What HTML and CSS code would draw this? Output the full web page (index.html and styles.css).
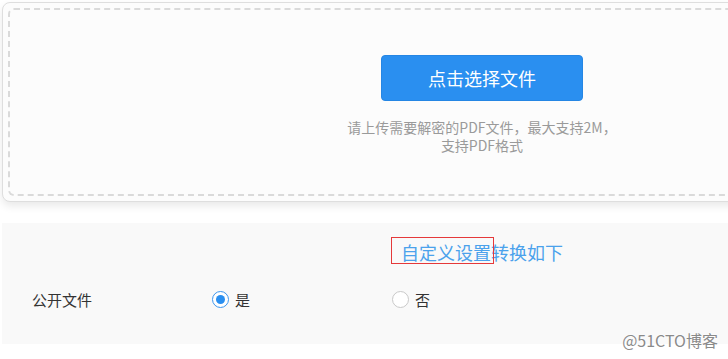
FILE: index.html
```html
<!DOCTYPE html>
<html lang="zh">
<head>
<meta charset="utf-8">
<link rel="stylesheet" href="styles.css">
</head>
<body>
<div class="page">
  <div class="card">
    <div class="drop">
      <button class="pick">点击选择文件</button>
      <div class="hint">
        <div class="line">请上传需要解密的PDF文件，最大支持2M，</div>
        <div class="line">支持PDF格式</div>
      </div>
    </div>
  </div>
  <div class="settings">
    <div class="title">自定义设置转换如下</div>
    <div class="mark"></div>
    <div class="row">
      <div class="label">公开文件</div>
      <label class="opt"><span class="radio on"></span><span>是</span></label>
      <label class="opt"><span class="radio"></span><span>否</span></label>
    </div>
  </div>
  <div class="water">@51CTO博客</div>
</div>
</body>
</html>
```
FILE: styles.css
```css
html, body {
  margin: 0;
  padding: 0;
  background: #ffffff;
  overflow: hidden;
}
.page {
  position: relative;
  width: 728px;
  height: 359px;
  overflow: hidden;
  font-family: "Noto Sans CJK SC", "Noto Sans", sans-serif;
  padding-top: 2px;
  box-sizing: border-box;
}
.card {
  margin-left: 2px;
  width: 960px;
  height: 200px;
  box-sizing: border-box;
  border: 1px solid #dedede;
  border-radius: 8px;
  background: #fcfcfc;
  padding: 5px;
  box-shadow: 0 4px 8px rgba(0, 0, 0, 0.09);
}
.drop {
  height: 188px;
  box-sizing: border-box;
  border: 2px dashed #dadada;
  border-radius: 6px;
  display: flex;
  flex-direction: column;
  align-items: center;
  padding-top: 45px;
}
.pick {
  width: 202px;
  height: 46px;
  border: 1px solid #2586e4;
  border-radius: 4px;
  background: #2a8ff0;
  color: #ffffff;
  font-family: inherit;
  font-size: 18px;
  padding: 0;
  margin: 0;
}
.hint {
  margin-top: 17px;
  font-size: 14px;
  color: #9a9a9a;
  text-align: center;
}
.line {
  height: 18px;
  line-height: 18px;
}
.settings {
  position: relative;
  margin-top: 21px;
  margin-left: 2px;
  width: 960px;
  height: 121px;
  box-sizing: border-box;
  background: #f9f9f9;
  padding-top: 16px;
}
.title {
  text-align: center;
  font-size: 18px;
  line-height: 26px;
  color: #4ba2ec;
}
.mark {
  position: absolute;
  left: 389px;
  top: 14px;
  width: 103px;
  height: 27px;
  border: 1px solid #e5393a;
  box-sizing: border-box;
}
.row {
  display: flex;
  align-items: center;
  margin-top: 18px;
  height: 32px;
  padding-left: 30px;
}
.label {
  width: 180px;
  font-size: 15px;
  color: #333333;
}
.opt {
  width: 180px;
  display: flex;
  align-items: center;
  gap: 6px;
  font-size: 15px;
  color: #333333;
}
.radio {
  width: 17px;
  height: 17px;
  box-sizing: border-box;
  border: 1px solid #c9c9c9;
  border-radius: 50%;
  background: #ffffff;
  display: flex;
  align-items: center;
  justify-content: center;
}
.radio.on {
  border-color: #3d96ee;
}
.radio.on::after {
  content: "";
  width: 9px;
  height: 9px;
  border-radius: 50%;
  background: #2a8ff0;
}
.water {
  position: absolute;
  right: 10px;
  top: 330px;
  font-size: 16px;
  line-height: 20px;
  color: #8a8a8a;
  text-shadow: 0 0 2px #ffffff, 0 0 2px #ffffff;
}
```
